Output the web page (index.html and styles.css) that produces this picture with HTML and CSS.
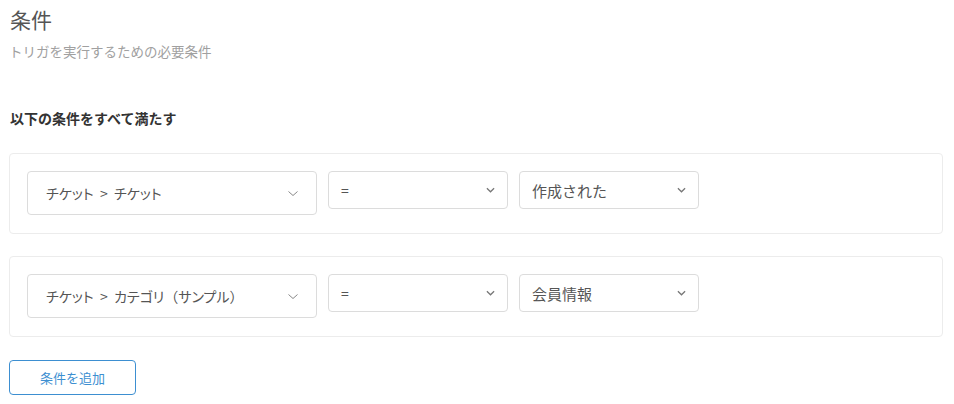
FILE: index.html
```html
<!DOCTYPE html>
<html lang="ja">
<head>
    <meta charset="UTF-8">
    <meta name="viewport" content="width=device-width, initial-scale=1.0">
    <title>条件</title>
    <link rel="stylesheet" href="styles.css">
</head>
<body>
    <div class="page">
        <h1 class="title">条件</h1>
        <p class="desc">トリガを実行するための必要条件</p>

        <h2 class="group-label">以下の条件をすべて満たす</h2>

        <div class="cond">
            <div class="sel sel-field">
                <span>チケット &nbsp;&gt;&nbsp; チケット</span>
                <svg class="chev thin" viewBox="0 0 10 5"><path d="M0.5 0.5 L5 4.5 L9.5 0.5"/></svg>
            </div>
            <div class="sel sel-op">
                <span>=</span>
                <svg class="chev" viewBox="0 0 10 6"><path d="M1 1 L5 5 L9 1"/></svg>
            </div>
            <div class="sel sel-val">
                <span>作成された</span>
                <svg class="chev" viewBox="0 0 10 6"><path d="M1 1 L5 5 L9 1"/></svg>
            </div>
        </div>

        <div class="cond">
            <div class="sel sel-field">
                <span>チケット &nbsp;&gt;&nbsp; カテゴリ<span class="wide">（</span>サンプル<span class="wide">）</span></span>
                <svg class="chev thin" viewBox="0 0 10 5"><path d="M0.5 0.5 L5 4.5 L9.5 0.5"/></svg>
            </div>
            <div class="sel sel-op">
                <span>=</span>
                <svg class="chev" viewBox="0 0 10 6"><path d="M1 1 L5 5 L9 1"/></svg>
            </div>
            <div class="sel sel-val">
                <span>会員情報</span>
                <svg class="chev" viewBox="0 0 10 6"><path d="M1 1 L5 5 L9 1"/></svg>
            </div>
        </div>

        <button class="add-btn">条件を追加</button>
    </div>
</body>
</html>
```

FILE: styles.css
```css
* {
    margin: 0;
    padding: 0;
    box-sizing: border-box;
}
body {
    font-family: "Noto Sans CJK JP", "Noto Sans", sans-serif;
    color: #555;
    background: #fff;
}
.page {
    width: 934px;
    margin-left: 9px;
    padding-top: 4px;
}
.title {
    font-size: 21px;
    font-weight: normal;
    line-height: 30px;
    color: #555;
    margin-left: 1px;
}
.desc {
    font-size: 13.5px;
    line-height: 20px;
    color: #a0a0a0;
    margin-top: 7px;
}
.group-label {
    font-size: 14px;
    font-weight: bold;
    color: #333;
    line-height: 20px;
    margin-top: 47px;
    margin-left: 1px;
}
.cond {
    display: flex;
    align-items: flex-start;
    gap: 11px;
    border: 1px solid #ececec;
    border-radius: 4px;
    padding: 17px;
    margin-top: 25px;
    height: 81px;
}
.cond + .cond {
    margin-top: 22px;
}
.sel {
    display: flex;
    align-items: center;
    justify-content: space-between;
    border: 1px solid #dcdcdc;
    border-radius: 4px;
    background: #fff;
    font-size: 14px;
    color: #555;
    height: 38px;
    padding: 0 12px;
}
.sel-field {
    width: 290px;
    height: 44px;
    padding: 0 18px;
    font-feature-settings: "palt";
}
.sel-field .wide {
    font-feature-settings: normal;
}
.sel-op {
    width: 180px;
}
.sel-val {
    width: 180px;
    font-size: 15px;
}
.chev {
    width: 9px;
    height: 6px;
    fill: none;
    stroke: #777;
    stroke-width: 1.4;
}
.chev.thin {
    width: 10px;
    height: 5px;
    stroke: #888;
    stroke-width: 1;
}
.add-btn {
    display: block;
    margin-top: 23px;
    width: 127px;
    height: 35px;
    border: 1px solid #3d8fd1;
    border-radius: 4px;
    background: #fff;
    color: #3d8fd1;
    font-family: inherit;
    font-size: 13px;
}
```
